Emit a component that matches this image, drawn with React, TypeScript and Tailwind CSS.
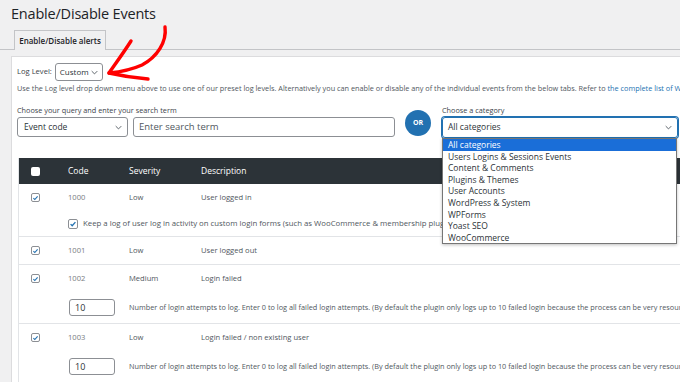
import React from 'react';

const categories = [
  'All categories',
  'Users Logins & Sessions Events',
  'Content & Comments',
  'Plugins & Themes',
  'User Accounts',
  'WordPress & System',
  'WPForms',
  'Yoast SEO',
  'WooCommerce',
];

const Chevron = ({ className = '' }: { className?: string }) => (
  <svg viewBox="0 0 10 6" className={`shrink-0 ${className}`} fill="none" stroke="currentColor" strokeWidth="1.3">
    <path d="M1 1l4 4 4-4" />
  </svg>
);

const Check = ({ small = false }: { small?: boolean }) => (
  <span className={`shrink-0 flex items-center justify-center border border-[#8c8f94] rounded-[2px] bg-white ${small ? 'w-[9px] h-[9px]' : 'w-[10px] h-[10px]'}`}>
    <svg viewBox="0 0 10 10" className="w-[8px] h-[8px]" fill="none" stroke="#2271b1" strokeWidth="1.6">
      <path d="M2 5.2l2 2 4-4.6" />
    </svg>
  </span>
);

const EventRow = ({ code, severity, text }: { code: string; severity: string; text: string }) => (
  <div className="flex items-center h-[27px] text-[7.6px] text-[#50575e]">
    <div className="w-[49px] shrink-0 pl-[12px]"><Check small /></div>
    <div className="w-[61px] shrink-0 text-[#787c82]">{code}</div>
    <div className="w-[72px] shrink-0">{severity}</div>
    <div>{text}</div>
  </div>
);

const AttemptsRow = () => (
  <div className="flex items-center h-[32px] text-[7.3px] text-[#50575e] border-b border-[#e2e4e7]">
    <div className="w-[50px] shrink-0" />
    <div className="w-[60px] shrink-0">
      <div className="w-[46px] h-[17px] border border-[#8c8f94] rounded-[3px] text-[9px] text-[#2c3338] flex items-center pl-[5px]">10</div>
    </div>
    <div>Number of login attempts to log. Enter 0 to log all failed login attempts. (By default the plugin only logs up to 10 failed login because the process can be very resource intensive in case of a brute force attack)</div>
  </div>
);

export default function App() {
  return (
    <div className="relative w-[680px] h-[382px] overflow-hidden bg-[#f0f0f1] whitespace-nowrap font-['Open_Sans',sans-serif] text-[#2c3338]">
      <h1 className="pl-[11px] pt-[3px] h-[30px] text-[14.5px] text-[#1d2327] tracking-[-0.2px]">Enable/Disable Events</h1>

      {/* tabs */}
      <div className="flex pl-[14px] border-b border-[#c3c4c7] h-[20px]">
        <div className="w-[92px] h-[20px] border border-b-0 border-[#c3c4c7] bg-[#f0f0f1] text-[8px] font-semibold text-[#1d2327] flex items-center justify-center">
          Enable/Disable alerts
        </div>
      </div>

      {/* panel */}
      <div className="ml-[11px] mt-[6px] bg-white border-l border-t border-[#dcdcde] pl-[5px] pt-[6px] h-[400px]">
        <div className="flex items-center gap-[3px] h-[18px] text-[7.6px] text-[#3c434a]">
          <span>Log Level:</span>
          <div className="w-[48px] h-[18px] border border-[#8c8f94] rounded-[3px] flex items-center justify-between pl-[4px] pr-[4px] text-[8px] text-[#2c3338]">
            Custom
            <Chevron className="w-[7px] h-[5px] text-[#50575e]" />
          </div>
        </div>
        <p className="mt-[1px] text-[7.3px] text-[#50575e] leading-[12px]">
          Use the Log level drop down menu above to use one of our preset log levels. Alternatively you can enable or disable any of the individual events from the below tabs. Refer to{' '}
          <span className="text-[#2271b1]">the complete list of WordPress activity log event IDs</span>
        </p>

        <div className="flex mt-[10px]">
          <div>
            <div className="text-[7.3px] text-[#3c434a] h-[13px] leading-[12px]">Choose your query and enter your search term</div>
            <div className="flex gap-[5px]">
              <div className="w-[111px] h-[20px] border border-[#8c8f94] rounded-[3px] flex items-center justify-between pl-[6px] pr-[5px] text-[8.5px] text-[#2c3338]">
                Event code
                <Chevron className="w-[7px] h-[5px] text-[#50575e]" />
              </div>
              <div className="w-[262px] h-[20px] border border-[#8c8f94] rounded-[3px] flex items-center pl-[5px] text-[9.5px] text-[#50575e]">
                Enter search term
              </div>
            </div>
          </div>
          <div className="ml-[10px] mt-[6px] w-[26px] h-[26px] rounded-full bg-[#2271b1] text-white text-[7px] font-bold flex items-center justify-center">
            OR
          </div>
          <div className="ml-[11px] relative">
            <div className="text-[7.3px] text-[#3c434a] h-[13px] leading-[12px]">Choose a category</div>
            <div className="w-[236px] h-[21px] border border-[#2271b1] rounded-[3px] shadow-[0_0_0_1px_#2271b1] flex items-center justify-between pl-[5px] pr-[5px] text-[8.5px] text-[#2c3338]">
              All categories
              <Chevron className="w-[7px] h-[5px] text-[#50575e]" />
            </div>
            {/* open dropdown */}
            <div className="absolute left-0 top-[34px] z-10 w-[235px] bg-white border border-[#767676] shadow-[0_1px_3px_rgba(0,0,0,0.25)]">
              {categories.map((c, i) => (
                <div
                  key={c}
                  className={`h-[11.6px] leading-[11.6px] pl-[5px] text-[8.5px] ${i === 0 ? 'bg-[#1a6ed8] text-white' : 'text-[#2c3338]'}`}
                >
                  {c}
                </div>
              ))}
            </div>
          </div>
        </div>

        {/* events table */}
        <div className="mt-[20px] ml-[1px] border-l border-[#e2e4e7]">
          <div className="flex items-center h-[26px] bg-[#2c3338] text-white text-[8.5px]">
            <div className="w-[49px] shrink-0 pl-[12px]">
              <span className="block w-[9px] h-[9px] bg-white rounded-[2px]" />
            </div>
            <div className="w-[61px] shrink-0">Code</div>
            <div className="w-[72px] shrink-0">Severity</div>
            <div>Description</div>
          </div>

          <EventRow code="1000" severity="Low" text="User logged in" />
          <div className="flex items-center h-[26px] text-[7.8px] text-[#50575e] border-b border-[#e2e4e7]">
            <div className="w-[49px] shrink-0" />
            <div className="flex items-center gap-[5px]">
              <Check />
              <span>Keep a log of user log in activity on custom login forms (such as WooCommerce &amp; membership plugins)</span>
            </div>
          </div>

          <div className="border-b border-[#e2e4e7]">
            <EventRow code="1001" severity="Low" text="User logged out" />
          </div>

          <EventRow code="1002" severity="Medium" text="Login failed" />
          <AttemptsRow />

          <EventRow code="1003" severity="Low" text="Login failed / non existing user" />
          <AttemptsRow />
        </div>
      </div>

      {/* hand-drawn annotation arrow */}
      <svg className="absolute inset-0 pointer-events-none" width="680" height="382" fill="none" stroke="#f00" strokeWidth="3.4" strokeLinecap="round" strokeLinejoin="round">
        <path d="M165 27 C167 42 157 57 142 65 C131 70 119 72 109 73" />
        <path d="M131 41 C124 52 116 63 109 73 C122 76 136 78 148 79" />
      </svg>
    </div>
  );
}
